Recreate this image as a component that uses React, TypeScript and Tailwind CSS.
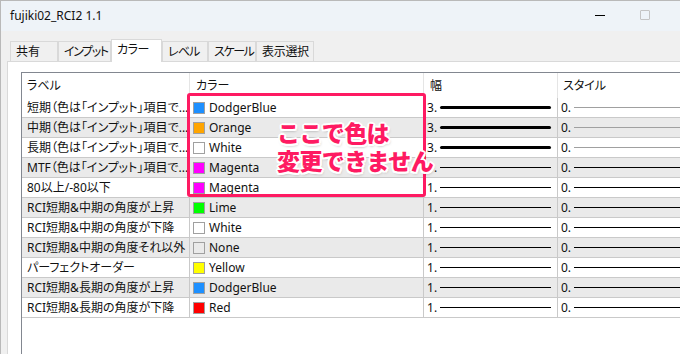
import React from "react";

type Row = { label: string; color: string | null; name: string; w: number; styleGray?: boolean };

const rows: Row[] = [
  { label: "短期（色は「インプット」項目で...", color: "#1e90ff", name: "DodgerBlue", w: 3, styleGray: true },
  { label: "中期（色は「インプット」項目で...", color: "#ffa500", name: "Orange", w: 3, styleGray: true },
  { label: "長期（色は「インプット」項目で...", color: "#ffffff", name: "White", w: 3, styleGray: true },
  { label: "MTF（色は「インプット」項目で...", color: "#ff00ff", name: "Magenta", w: 1 },
  { label: "80以上/-80以下", color: "#ff00ff", name: "Magenta", w: 1 },
  { label: "RCI短期&中期の角度が上昇", color: "#00ff00", name: "Lime", w: 1 },
  { label: "RCI短期&中期の角度が下降", color: "#ffffff", name: "White", w: 1 },
  { label: "RCI短期&中期の角度それ以外", color: null, name: "None", w: 1 },
  { label: "パーフェクトオーダー", color: "#ffff00", name: "Yellow", w: 1 },
  { label: "RCI短期&長期の角度が上昇", color: "#1e90ff", name: "DodgerBlue", w: 1 },
  { label: "RCI短期&長期の角度が下降", color: "#ff0000", name: "Red", w: 1 },
];

const tabs = [
  { t: "共有", w: "w-[48px]", tr: "tracking-[0px]" },
  { t: "インプット", w: "w-[53px]", tr: "tracking-[-1.4px]" },
  { t: "カラー", w: "w-[51px]", tr: "tracking-[-0.5px]", sel: true },
  { t: "レベル", w: "w-[46px]", tr: "tracking-[-0.8px]" },
  { t: "スケール", w: "w-[48px]", tr: "tracking-[-1.4px]" },
  { t: "表示選択", w: "w-[58px]", tr: "tracking-[-0.3px]" },
];

export default function App() {
  return (
    <div
      className="relative w-[680px] h-[354px] overflow-hidden bg-[#f0f0f0] border-l border-t border-[#b9b9b9] flex flex-col text-[12px] text-[#111] [font-family:'Noto_Sans','Noto_Sans_CJK_JP',sans-serif] [font-feature-settings:'palt']"
    >
      {/* title bar */}
      <div className="h-[30px] shrink-0 bg-[#eef3f8] flex items-center pl-[9px] relative">
        <span className="leading-none">fujiki02_RCI2 1.1</span>
        <div className="absolute left-[594px] top-[14px] w-[10px] h-px bg-black" />
        <div className="absolute left-[639px] top-[9px] w-[10px] h-[10px] border border-[#c4c4c4] rounded-[1px]" />
      </div>

      {/* tabs */}
      <div className="h-[30px] shrink-0 flex items-end pl-[9px]">
        {tabs.map((tab) =>
          tab.sel ? (
            <div
              key={tab.t}
              className={`${tab.w} ${tab.tr} h-[23px] -mb-px relative z-10 bg-white border border-b-0 border-[#d9d9d9] pl-[5px] pt-[2px] leading-[16px] whitespace-nowrap overflow-hidden`}
            >
              {tab.t}
            </div>
          ) : (
            <div
              key={tab.t}
              className={`${tab.w} ${tab.tr} h-[20px] bg-[#f0f0f0] border border-b-0 border-[#d9d9d9] pl-[5px] pt-[2px] leading-[16px] whitespace-nowrap overflow-hidden`}
            >
              {tab.t}
            </div>
          )
        )}
      </div>

      {/* panel */}
      <div className="flex-1 ml-[6px] border-l border-t border-[#d9d9d9] bg-white pt-[10px] pl-[13px]">
        <div className="h-full border-l border-t border-[#828790] bg-white">
          {/* header */}
          <div className="h-[25px] flex">
            <div className="w-[168px] shrink-0 border-r border-[#e5e5e5] pl-[5px] flex items-center">ラベル</div>
            <div className="w-[234px] shrink-0 border-r border-[#e5e5e5] pl-[6px] flex items-center">カラー</div>
            <div className="w-[134px] shrink-0 border-r border-[#e5e5e5] pl-[6px] flex items-center">幅</div>
            <div className="flex-1 pl-[5px] flex items-center">スタイル</div>
          </div>
          {rows.map((r, i) => (
            <div key={i} className={`h-[20px] flex border-b border-[#c9c9c9] ${i % 2 === 1 ? "bg-[#eaeaea]" : "bg-white"}`}>
              <div className="w-[168px] shrink-0 border-r border-[#c9c9c9] pl-[5px] flex items-center overflow-hidden whitespace-nowrap">
                {r.label}
              </div>
              <div className="w-[234px] shrink-0 border-r border-[#c9c9c9] pl-[3px] flex items-center gap-[4px]">
                <span
                  className="w-[12px] h-[12px] border border-[#a0a0a0] shrink-0"
                  style={{ backgroundColor: r.color ?? "transparent" }}
                />
                <span>{r.name}</span>
              </div>
              <div className="w-[134px] shrink-0 border-r border-[#c9c9c9] pl-[3px] flex items-center">
                <span className="w-[13px]">{r.w}.</span>
                <span className={`w-[111px] bg-black ${r.w === 3 ? "h-[3px] rounded-full" : "h-px"}`} />
              </div>
              <div className="flex-1 pl-[3px] flex items-center">
                <span className="w-[13px]">0.</span>
                <span className={`flex-1 h-px ${r.styleGray ? "bg-[#a0a0a0]" : "bg-black"}`} />
              </div>
            </div>
          ))}
        </div>
      </div>

      {/* annotation */}
      <div className="absolute left-[186px] top-[92px] w-[239px] h-[104px] border-[3px] border-[#fe1a62] rounded-[3px]" />
      <div className="absolute left-[276px] top-[117px] text-[23px] leading-[28px] font-black text-[#fe1a62] tracking-[-0.6px] whitespace-nowrap [font-feature-settings:normal] [font-family:'Noto_Sans_CJK_JP',sans-serif] [text-shadow:-2px_0_0_#fff,2px_0_0_#fff,0_-2px_0_#fff,0_2px_0_#fff,-1.5px_-1.5px_0_#fff,1.5px_1.5px_0_#fff,-1.5px_1.5px_0_#fff,1.5px_-1.5px_0_#fff,1px_2px_3px_rgba(0,0,0,0.35)]">
        <div>ここで色は</div>
        <div>変更できません</div>
      </div>
    </div>
  );
}
